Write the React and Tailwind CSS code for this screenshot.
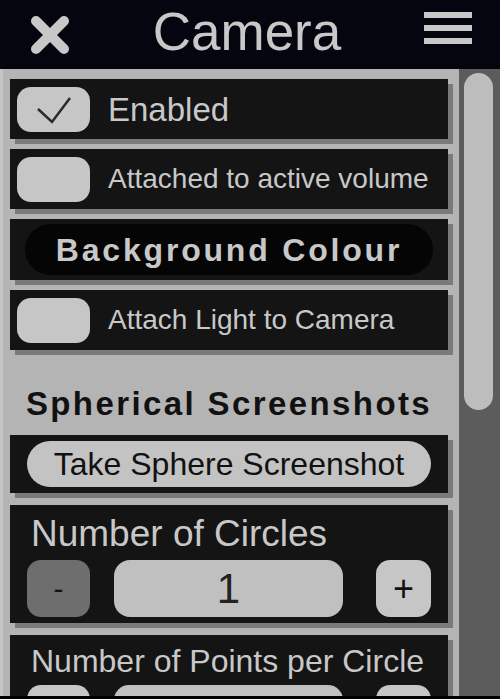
import React from "react";

function Toggle({ checked }) {
  return (
    <div className="w-[73px] h-[45px] rounded-[14px] bg-[#c6c6c6] flex items-center justify-center shrink-0">
      {checked && (
        <svg width="73" height="45" viewBox="0 0 73 45">
          <path d="M21 22 L35 35 L53 11" fill="none" stroke="#2a2a2a" strokeWidth="2.5" />
        </svg>
      )}
    </div>
  );
}

function ToggleRow({ label, checked, size }) {
  return (
    <div className="h-[60px] shrink-0 bg-[#141414] shadow-[5px_5px_0_#7a7a7a] flex items-center pl-[7px] gap-[18px]">
      <Toggle checked={checked} />
      <span className={`${size} text-[#c8c8c8] leading-none`}>{label}</span>
    </div>
  );
}

function Stepper({ value }) {
  return (
    <div className="flex items-center pl-[17px] pr-[17px]">
      <div className="w-[63px] h-[57px] rounded-[14px] bg-[#6e6e6e] flex items-center justify-center text-[30px] text-[#111]">-</div>
      <div className="ml-[24px] w-[229px] h-[57px] rounded-[16px] bg-[#c0c0c0] flex items-center justify-center text-[42px] text-[#222]">{value}</div>
      <div className="ml-auto w-[55px] h-[57px] rounded-[14px] bg-[#c6c6c6] flex items-center justify-center text-[36px] text-[#111]">+</div>
    </div>
  );
}

export default function App() {
  return (
    <div className="w-[500px] h-[699px] flex flex-col overflow-hidden bg-black" style={{ fontFamily: '"Liberation Sans", Arial, sans-serif' }}>
      <div className="h-[69px] bg-[#05050f] flex items-center justify-between px-[30px] pr-[28px] shrink-0">
        <svg width="40" height="40" viewBox="0 0 40 40">
          <path d="M6 6 L34 34 M34 6 L6 34" stroke="#c8c8c8" strokeWidth="10" strokeLinecap="round" />
        </svg>
        <span className="text-[53px] text-[#c8c8c8] leading-none pb-[6px]">Camera</span>
        <div className="w-[48px] self-start mt-[12px] flex flex-col gap-[7px]">
          <div className="h-[6px] bg-[#c8c8c8]" />
          <div className="h-[6px] bg-[#c8c8c8]" />
          <div className="h-[6px] bg-[#c8c8c8]" />
        </div>
      </div>
      <div className="h-[627px] flex shrink-0">
        <div className="w-[459px] overflow-hidden bg-[#b4b4b4] border-l-[3px] border-[#c4c4c4] pt-[10px] pl-[7px] pr-[11px] flex flex-col">
          <ToggleRow label="Enabled" checked size="text-[33px]" />
          <div className="h-[10px] shrink-0" />
          <ToggleRow label="Attached to active volume" size="text-[28px]" />
          <div className="h-[10px] shrink-0" />
          <div className="h-[61px] shrink-0 bg-[#141414] shadow-[5px_5px_0_#7a7a7a] flex items-center px-[15px]">
            <div className="w-full h-[51px] rounded-full bg-[#050505] flex items-center justify-center text-[32px] font-bold tracking-[2.8px] text-[#c8c8c8]">
              Background Colour
            </div>
          </div>
          <div className="h-[10px] shrink-0" />
          <ToggleRow label="Attach Light to Camera" size="text-[28px]" />
          <div className="h-[65px] mt-[10px] shrink-0 flex items-end justify-center pb-[5px]">
            <span className="text-[33px] font-bold tracking-[2.4px] text-[#111] leading-none">Spherical Screenshots</span>
          </div>
          <div className="h-[58px] mt-[10px] shrink-0 bg-[#141414] shadow-[5px_5px_0_#7a7a7a] flex items-center px-[17px]">
            <div className="w-full h-[46px] rounded-full bg-[#c3c3c3] flex items-center justify-center text-[32px] text-[#111]">
              Take Sphere Screenshot
            </div>
          </div>
          <div className="h-[118px] mt-[12px] shrink-0 bg-[#141414] shadow-[5px_5px_0_#7a7a7a] flex flex-col pt-[10px]">
            <div className="text-[37px] text-[#c8c8c8] leading-none pl-[21px] h-[45px]">Number of Circles</div>
            <Stepper value="1" />
          </div>
          <div className="h-[80px] mt-[12px] shrink-0 bg-[#141414] shadow-[5px_5px_0_#7a7a7a] flex flex-col pt-[10px]">
            <div className="text-[32px] text-[#c8c8c8] leading-none pl-[21px] h-[43px]">Number of Points per Circle</div>
            <div className="flex items-start pl-[17px] pr-[17px]">
              <div className="w-[63px] h-[30px] rounded-[14px] bg-[#c6c6c6]" />
              <div className="ml-[24px] w-[229px] h-[30px] rounded-[16px] bg-[#c0c0c0]" />
              <div className="ml-auto w-[55px] h-[30px] rounded-[14px] bg-[#c6c6c6]" />
            </div>
          </div>
        </div>
        <div className="flex-1 bg-[#5c5c5c] pl-[5px] pr-[7px] pt-[4px]">
          <div className="w-[29px] h-[337px] rounded-full bg-[#bdbdbd]" />
        </div>
      </div>
      <div className="h-[3px] bg-black" />
    </div>
  );
}
